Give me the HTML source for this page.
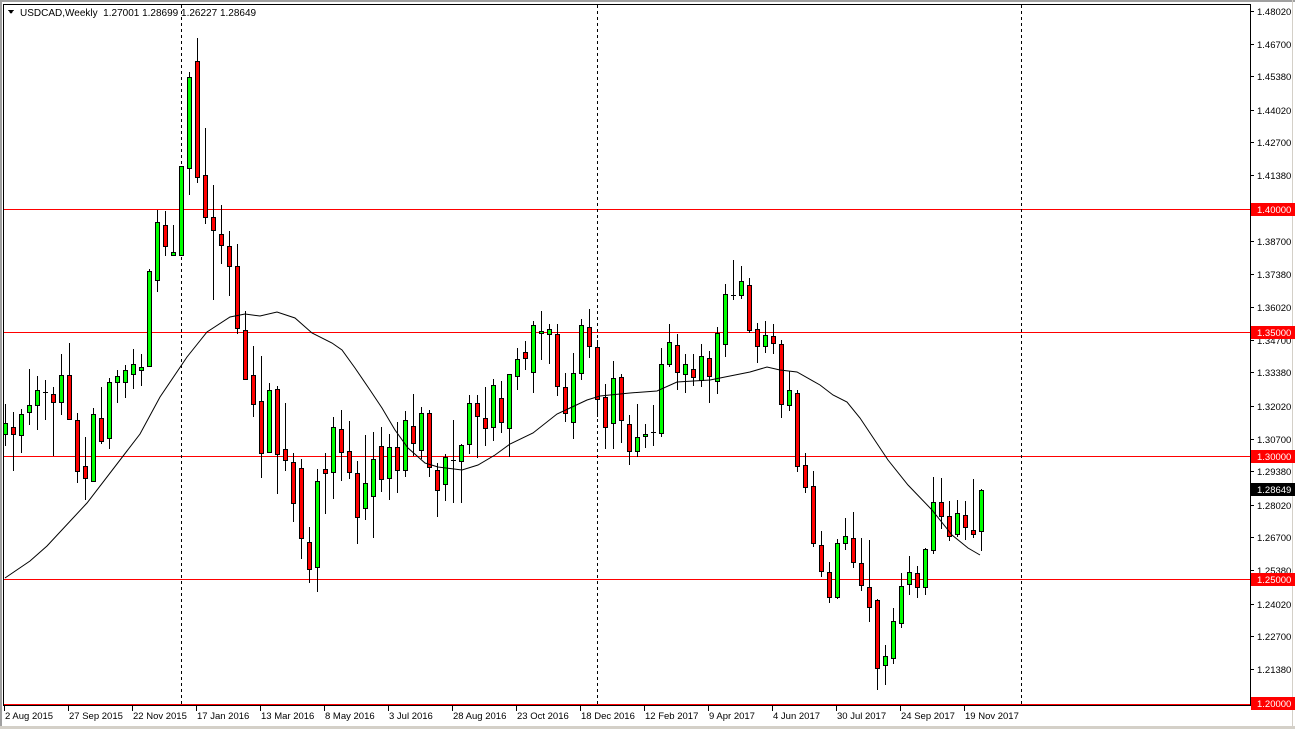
<!DOCTYPE html>
<html><head><meta charset="utf-8">
<style>
html,body{margin:0;padding:0;background:#fff;}
body{width:1295px;height:729px;overflow:hidden;position:relative;font-family:"Liberation Sans",sans-serif;}
svg{position:absolute;left:0;top:0;}
</style></head>
<body>
<svg id="s" width="1295" height="729" xmlns="http://www.w3.org/2000/svg" shape-rendering="crispEdges" font-family="Liberation Sans, sans-serif">
<rect x="0" y="0" width="1295" height="729" fill="#fff"/>
<rect x="0" y="0" width="1295" height="2" fill="#a0a0a0"/>
<rect x="0" y="0" width="2" height="729" fill="#a0a0a0"/>
<rect x="0" y="726" width="1295" height="3" fill="#d4d0c8"/>
<rect x="1292" y="0" width="1" height="726" fill="#d4d0c8"/>
<g fill="#ff0000">
<rect x="4" y="209" width="1246" height="1"/>
<rect x="4" y="332" width="1246" height="1"/>
<rect x="4" y="456" width="1246" height="1"/>
<rect x="4" y="579" width="1246" height="1"/>
<rect x="4" y="704" width="1246" height="1"/>
</g>
<g stroke="#000" stroke-dasharray="3,3">
<line x1="181.5" y1="5" x2="181.5" y2="705"/>
<line x1="597.5" y1="5" x2="597.5" y2="705"/>
<line x1="1021.5" y1="5" x2="1021.5" y2="705"/>
</g>
<g id="cd"></g>
<polyline fill="none" stroke="#000" stroke-width="1" shape-rendering="auto" points="5,578 30,561 47,546 87,503 140,434 160,397 187,357 207,332 230,317 245,314 260,316 277,312 295,318 312,333 332,343 342,350 355,368 370,390 382,408 395,430 408,448 425,463 438,467 462,470 478,465 495,455 510,444 533,433 557,414 570,408 587,400 600,396 630,393 657,391 677,382 710,380 720,378 750,372 767,367 780,370 797,372 820,385 833,395 847,402 860,418 888,460 908,485 932,510 952,535 968,548 980,555"/>
<rect x="3.5" y="4.5" width="1247" height="701" fill="none" stroke="#000"/>
<g id="ax" font-size="9.5" fill="#000"></g>
<text x="20" y="16" font-size="10" fill="#000">USDCAD,Weekly&#160;&#160;1.27001 1.28699 1.26227 1.28649</text>
<polygon points="8,10 14,10 11,14" fill="#000"/>
</svg>
<script>
var NS="http://www.w3.org/2000/svg";
function el(t,a,p){var e=document.createElementNS(NS,t);for(var k in a)e.setAttribute(k,a[k]);(p||document.getElementById('cd')).appendChild(e);return e;}
var G=[
{i0:0,oy:30,sy:2.7506,c:[[1080,1112,1028,1142,'g'],[1093,1112,1050,1210,'r'],[1057,1115,1043,1160,'g'],[1032,1052,933,1083,'g'],[989,1032,952,1097,'g'],[997,999,963,1070,'d'],[1002,1024,982,1168,'r'],[950,1022,890,1055,'g'],[950,1071,860,1071,'r'],[1074,1214,1053,1242,'r'],[1200,1233,1120,1290,'r'],[1057,1241,1040,1241,'g'],[1066,1130,982,1137,'r'],[968,1123,958,1150,'g'],[953,969,935,1022,'g'],[934,969,922,1010,'g'],[920,947,878,985,'g'],[927,934,890,977,'g'],[663,925,657,925,'g'],[529,689,495,717,'g'],[537,595,497,618,'r'],[612,618,535,620,'g'],[375,620,375,620,'g'],[130,380,115,450,'g'],[86,405,22,417,'r'],[400,513,270,530,'r'],[515,550,425,740,'r'],[562,592,480,640,'r'],[595,650,553,730,'r'],[650,820,590,833,'r'],[825,960,773,960,'r']]},
{i0:31,oy:300,sy:3,c:[[226,313,138,348,'r'],[304,460,168,530,'r'],[271,457,250,457,'g'],[268,463,258,578,'r'],[448,481,309,510,'r'],[487,610,460,663,'r'],[505,715,477,775,'r'],[727,808,680,845,'r'],[544,802,507,872,'g'],[508,520,460,640,'r'],[382,517,351,593,'g'],[388,457,330,539,'r'],[454,517,363,535,'r'],[520,652,484,728,'r'],[550,625,405,658,'g'],[476,589,396,710,'g'],[439,538,381,572,'r'],[442,535,402,596,'g'],[442,511,366,575,'r'],[361,511,333,527,'g'],[379,430,282,466,'r'],[340,451,321,475,'g'],[340,502,330,527,'r'],[511,571,490,647,'r'],[470,553,462,599,'g'],[479,481,360,605,'d'],[436,484,432,605,'g'],[310,433,285,460,'g'],[310,349,285,472,'r'],[355,385,262,436,'r'],[256,382,237,420,'g']]},
{i0:62,oy:250,sy:3,c:[[445,517,393,545,'r'],[373,535,373,618,'g'],[327,379,295,416,'g'],[307,325,273,357,'r'],[226,367,212,425,'g'],[243,248,183,326,'g'],[238,252,222,340,'g'],[251,409,222,434,'r'],[411,490,368,513,'r'],[370,517,309,563,'g'],[226,369,208,386,'g'],[232,289,178,322,'r'],[292,447,270,497,'r'],[442,532,402,595,'r'],[385,520,333,595,'g'],[382,511,373,575,'r'],[522,603,494,643,'r'],[562,604,462,617,'g'],[552,559,523,590,'g'],[546,548,465,585,'d'],[343,550,295,557,'g'],[277,343,222,348,'g'],[286,367,252,416,'r'],[343,373,312,425,'g'],[357,382,313,404,'r'],[319,389,283,407,'g'],[325,379,302,455,'r'],[250,394,232,428,'g'],[133,283,102,318,'g']]},
{i0:91,oy:250,sy:3,c:[[136,138,30,148,'d'],[94,136,48,143,'g'],[106,241,84,245,'r'],[238,289,219,335,'r'],[256,289,213,305,'g'],[259,280,222,308,'r'],[283,463,270,500,'r'],[421,466,362,479,'g'],[430,649,420,662,'r'],[646,712,609,725,'r'],[709,880,663,887,'r'],[885,964,843,977,'r'],[967,1042,937,1057,'r'],[880,1040,867,1043,'g'],[858,880,803,898,'g'],[865,937,786,950,'r']]},
{i0:107,oy:460,sy:3,c:[[310,376,235,390,'r'],[381,442,240,482,'r'],[421,625,418,688,'r'],[589,616,555,673,'g'],[484,593,444,608,'g'],[378,488,340,502,'g'],[337,373,289,401,'g'],[340,382,318,412,'r'],[267,382,265,401,'g'],[127,271,51,278,'g'],[127,168,54,203,'r'],[169,229,124,240,'r'],[160,222,121,229,'g'],[166,202,122,236,'r'],[211,222,58,230,'r'],[91,214,87,271,'g']]}
];
G.forEach(function(g){g.c.forEach(function(d,k){
 var i=g.i0+k,x=5+8*i,R=function(v){return Math.round(g.oy+v/g.sy);};
 var bt=R(d[0]),bb=R(d[1]),wt=R(d[2]),wb=R(d[3]);
 if(wt>bt)wt=bt; if(wb<bb)wb=bb;
 el('line',{x1:x+.5,y1:wt,x2:x+.5,y2:wb+1,stroke:'#000'});
 if(d[4]=='d'){el('line',{x1:x-2,y1:bt+.5,x2:x+3,y2:bt+.5,stroke:'#000'});}
 else{if(bb-bt<2)bb=bt+2;el('rect',{x:x-1.5,y:bt+.5,width:4,height:bb-bt,fill:d[4]=='g'?'#00ff00':'#ff0000',stroke:'#000'});}
});});
var ax=document.getElementById('ax');
var P=[1.4802,1.467,1.4538,1.4402,1.427,1.4138,1.387,1.3738,1.3602,1.347,1.3338,1.3202,1.307,1.2938,1.2802,1.267,1.2538,1.2402,1.227,1.2138];
P.forEach(function(p){var y=Math.round(209+(1.4-p)*2469);
 el('line',{x1:1250,y1:y+.5,x2:1254,y2:y+.5,stroke:'#000'},ax);
 var t=el('text',{x:1257,y:y+4},ax);t.textContent=p.toFixed(5);});
[[1.4,'#ff0000'],[1.35,'#ff0000'],[1.3,'#ff0000'],[1.28649,'#000'],[1.25,'#ff0000'],[1.2,'#ff0000']].forEach(function(q){
 var y=Math.round(209+(1.4-q[0])*2469);
 el('rect',{x:1251,y:y-6,width:44,height:13,fill:q[1]},ax);
 var t=el('text',{x:1257,y:y+4,fill:'#fff'},ax);t.textContent=q[0].toFixed(5);});
var D=['2 Aug 2015','27 Sep 2015','22 Nov 2015','17 Jan 2016','13 Mar 2016','8 May 2016','3 Jul 2016','28 Aug 2016','23 Oct 2016','18 Dec 2016','12 Feb 2017','9 Apr 2017','4 Jun 2017','30 Jul 2017','24 Sep 2017','19 Nov 2017'];
D.forEach(function(s,k){var x=4+64*k;
 el('line',{x1:x+.5,y1:706,x2:x+.5,y2:711,stroke:'#000'},ax);
 var t=el('text',{x:x+1,y:719},ax);t.textContent=s;});
</script>
</body></html>
